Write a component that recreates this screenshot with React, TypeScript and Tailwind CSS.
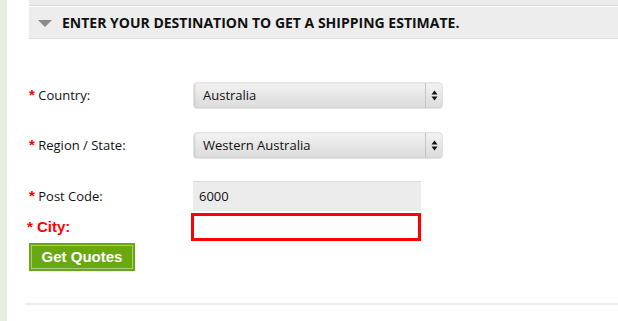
import { useState } from 'react';

const labelFont = { fontFamily: '"Open Sans", "DejaVu Sans", sans-serif' };

function Label({ text, error }: { text: string; error?: boolean }) {
  if (error) {
    return (
      <div className="w-[164px] text-[15px] font-bold text-[#ff0000] font-['Liberation_Sans',Arial,sans-serif]">
        * {text}
      </div>
    );
  }
  return (
    <div className="w-[164px] text-[13px] text-[#111]">
      <span className="text-[#ff0000] font-bold font-['Liberation_Sans',Arial,sans-serif] text-[15px]">*</span> {text}
    </div>
  );
}

function FakeSelect({ value }: { value: string }) {
  return (
    <div className="flex h-[27px] w-[250px] items-center rounded-[4px] border border-[#e3e3e3] bg-gradient-to-b from-[#f3f3f3] via-[#e6e6e6] to-[#dcdcdc] shadow-[inset_1px_0_2px_rgba(0,0,0,0.12)]">
      <span className="flex-1 pl-[9px] text-[13px] text-[#111]">{value}</span>
      <span className="h-full w-px bg-[#c4c4c4]" />
      <span className="flex w-[16px] justify-center">
        <svg width="7" height="11" viewBox="0 0 7 11">
          <path d="M3.5 0.5 L6.5 4.5 H0.5 Z" fill="#111" />
          <path d="M3.5 10.5 L6.5 6.5 H0.5 Z" fill="#111" />
        </svg>
      </span>
    </div>
  );
}

export default function App() {
  const [city, setCity] = useState('');
  return (
    <div className="flex h-[321px] w-[618px] overflow-hidden bg-white" style={labelFont}>
      <div className="w-[7px] shrink-0 bg-[#e6eee0]" />
      <div className="flex-1 pl-[22px]">
        <div className="h-[5px] bg-[#ececec]" />
        <div className="h-px bg-[#d8d8d8]" />
        <div className="h-px bg-white" />
        <div className="flex h-[32px] items-center border-b border-[#dcdcdc] bg-[#ededed] pl-[9px]">
          <svg width="14" height="7" viewBox="0 0 14 7" className="mt-px">
            <path d="M0 0 H14 L7 7 Z" fill="#8a8a8a" />
          </svg>
          <span className="ml-[10px] text-[14px] font-bold text-[#111]">
            ENTER YOUR DESTINATION TO GET A SHIPPING ESTIMATE.
          </span>
        </div>

        <div className="pt-[43px]">
          <div className="flex items-center">
            <Label text="Country:" />
            <FakeSelect value="Australia" />
          </div>
          <div className="mt-[23px] flex items-center">
            <Label text="Region / State:" />
            <FakeSelect value="Western Australia" />
          </div>
          <div className="mt-[22px] flex items-center">
            <Label text="Post Code:" />
            <div className="flex h-[30px] w-[228px] items-center border-t border-[#dcdcdc] bg-[#ececec] pl-[6px] text-[13px] text-[#111]">
              6000
            </div>
          </div>
          <div className="mt-[2px] flex items-center">
            <div className="-ml-[2px]">
              <Label text="City:" error />
            </div>
            <input
              value={city}
              onChange={(e) => setCity(e.target.value)}
              className="h-[28px] w-[230px] border-[3px] border-[#ff0000] bg-white outline-none"
            />
          </div>
          <button className="mt-[2px] flex h-[28px] w-[106px] items-center justify-center bg-[#6aa812] p-[2px]">
            <span className="flex h-full w-full items-center justify-center border border-[#a8cc7a] text-[15px] font-bold text-white font-['Liberation_Sans',Arial,sans-serif]">
              Get Quotes
            </span>
          </button>
        </div>
        <div className="mt-[32px] -ml-[4px] h-[2px] bg-[#ececec]" />
      </div>
    </div>
  );
}
